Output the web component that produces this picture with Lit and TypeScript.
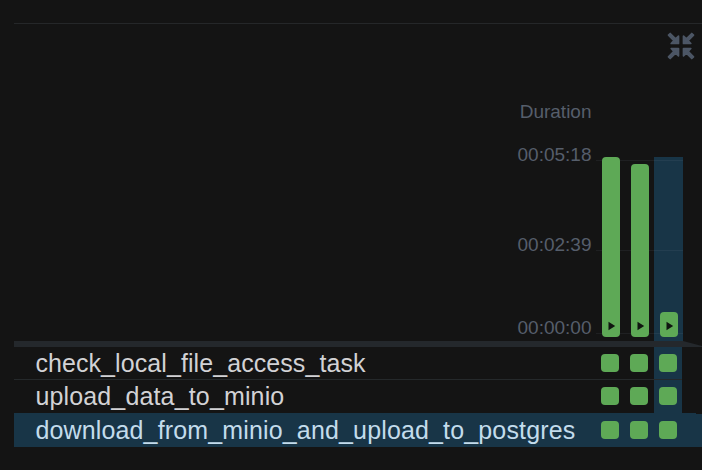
import { LitElement, html, css } from "lit";
import { customElement } from "lit/decorators.js";
import { classMap } from "lit/directives/class-map.js";

const runs = [
  { height: 180, selected: false },
  { height: 173, selected: false },
  { height: 25, selected: true },
];
const tasks = [
  { name: "check_local_file_access_task", kind: "first" },
  { name: "upload_data_to_minio", kind: "second" },
  { name: "download_from_minio_and_upload_to_postgres", kind: "active" },
];

@customElement("app-root")
export class AppRoot extends LitElement {
  static styles = css`
    :host {
      display: block;
      height: 470px;
      overflow: hidden;
      background: #141414;
      font-family: "Liberation Sans", Arial, sans-serif;
    }
    .panel {
      box-sizing: border-box;
      padding: 23px 0 0 14px;
    }
    .toolbar {
      box-sizing: border-box;
      height: 78px;
      border-top: 1px solid #252729;
      display: flex;
      justify-content: flex-end;
      padding: 8px 7px 0 0;
    }
    .toolbar svg {
      width: 28px;
      height: 28px;
      fill: #4c5665;
      stroke: #4c5665;
      stroke-width: 1.7;
      stroke-linejoin: round;
    }
    .chart {
      display: flex;
      height: 240px;
    }
    .axis {
      width: 577.5px;
      display: flex;
      flex-direction: column;
      align-items: flex-end;
      color: #565e6b;
      font-size: 19px;
      line-height: 22px;
      white-space: nowrap;
    }
    .title { margin-bottom: 21px; }
    .top { margin-bottom: 68px; }
    .mid { margin-bottom: 61px; }
    .plot {
      position: relative;
      display: flex;
      margin: 56px 0 0 4.5px;
      width: 92px;
      height: 184px;
    }
    .line {
      position: absolute;
      left: 0;
      width: 87px;
      height: 1px;
      background: #7c8798;
      opacity: 0.11;
    }
    .l1 { top: 3px; }
    .l2 { top: 93px; }
    .l3 { top: 176px; }
    .slot {
      box-sizing: border-box;
      width: 29px;
      height: 184px;
      padding: 0 5px 4px 6px;
      display: flex;
      align-items: flex-end;
    }
    .slot.selected { background: #183547; }
    .bar {
      position: relative;
      z-index: 1;
      width: 18px;
      border-radius: 4px;
      background: #5ea956;
      display: flex;
      align-items: flex-end;
    }
    .bar svg {
      display: block;
      width: 18px;
      height: 22px;
      fill: #101510;
    }
    .divider {
      height: 6px;
      background: #24282c;
      clip-path: polygon(0 0, 669px 0, 100% 5px, 100% 100%, 0 100%);
    }
    .row {
      box-sizing: border-box;
      display: flex;
      height: 33px;
      color: #d2d2d5;
      font-size: 25px;
      letter-spacing: 0.15px;
      line-height: 33px;
    }
    .first {
      width: 668px;
      border-bottom: 1px solid #25292b;
      letter-spacing: 0.08px;
    }
    .active {
      height: 34px;
      background: #183547;
      color: #c3dcec;
      line-height: 34px;
      clip-path: polygon(0 0, 682px 0, 682px 1px, 100% 1px, 100% 100%, 0 100%);
    }
    .name {
      box-sizing: border-box;
      width: 582px;
      padding-left: 21.4px;
      white-space: nowrap;
    }
    .cell {
      box-sizing: border-box;
      width: 29px;
      padding: 7px 5px 0;
    }
    .active .cell { padding-top: 8px; }
    .cell.selected {
      width: 28px;
      background: #183547;
    }
    .state {
      width: 18px;
      height: 18px;
      border-radius: 4px;
      background: #5ea956;
    }
  `;

  render() {
    return html`<div class="panel">
      <div class="toolbar">
        <svg viewBox="0 0 28 28">
          <path d="M1.5 3.2 3.2 1.5 8.6 6.9 11.5 4.2V11.5H4.2L6.9 8.6Z" />
          <path transform="rotate(90 14 14)" d="M1.5 3.2 3.2 1.5 8.6 6.9 11.5 4.2V11.5H4.2L6.9 8.6Z" />
          <path transform="rotate(180 14 14)" d="M1.5 3.2 3.2 1.5 8.6 6.9 11.5 4.2V11.5H4.2L6.9 8.6Z" />
          <path transform="rotate(270 14 14)" d="M1.5 3.2 3.2 1.5 8.6 6.9 11.5 4.2V11.5H4.2L6.9 8.6Z" />
        </svg>
      </div>
      <div class="chart">
        <div class="axis">
          <div class="title">Duration</div>
          <div class="top">00:05:18</div>
          <div class="mid">00:02:39</div>
          <div>00:00:00</div>
        </div>
        <div class="plot">
          ${runs.map(
            (r) => html`<div class=${classMap({ slot: true, selected: r.selected })}>
              <div class="bar" style="height:${r.height}px">
                <svg viewBox="0 0 18 22"><path d="M6.5 6.8 13.2 11 6.5 15.2Z" /></svg>
              </div>
            </div>`
          )}
          <div class="line l1"></div>
          <div class="line l2"></div>
          <div class="line l3"></div>
        </div>
      </div>
      <div class="divider"></div>
      ${tasks.map(
        (t) => html`<div class="row ${t.kind}">
          <div class="name">${t.name}</div>
          ${runs.map(
            (r) => html`<div class=${classMap({ cell: true, selected: r.selected })}>
              <div class="state"></div>
            </div>`
          )}
        </div>`
      )}
    </div>`;
  }
}
